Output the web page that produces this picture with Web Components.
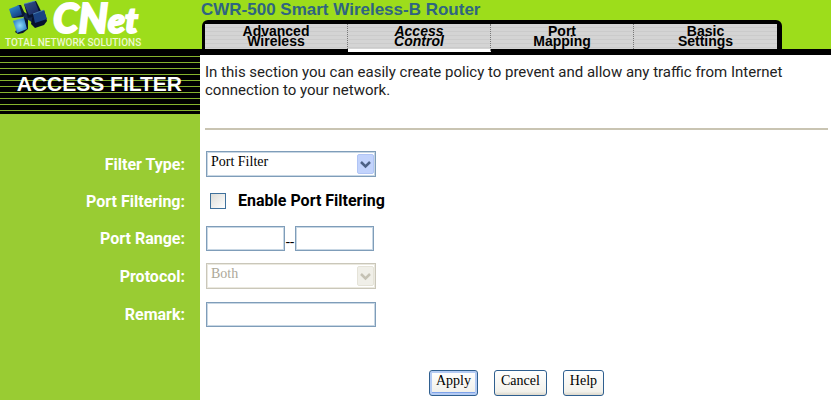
<!DOCTYPE html>
<html lang="en">
<head>
<meta charset="utf-8">
<title>CWR-500 Smart Wireless-B Router</title>
<style>
html,body{height:100%}
body{margin:0;background:#fff;color:#000;font:15px/18px Roboto,"Liberation Sans",sans-serif;
--lime:#9ddd1b;--side:#99cc33;--side-w:200px;--line:#7f9db9;--serif:"Liberation Serif",serif}
</style>
</head>
<body>
<router-page>
  <router-header slot="header" heading="CWR-500 Smart Wireless-B Router">
    <cnet-logo slot="logo"></cnet-logo>
    <nav-tab>Advanced<br>Wireless</nav-tab>
    <nav-tab active>Access<br>Control</nav-tab>
    <nav-tab>Port<br>Mapping</nav-tab>
    <nav-tab>Basic<br>Settings</nav-tab>
  </router-header>
  <section-intro slot="intro" heading="ACCESS FILTER">In this section you can easily create policy to prevent and allow any traffic from Internet connection to your network.</section-intro>
  <select-field label="Filter Type:" value="Port Filter"></select-field>
  <check-field label="Port Filtering:" text="Enable Port Filtering"></check-field>
  <range-field label="Port Range:"></range-field>
  <select-field label="Protocol:" value="Both" disabled></select-field>
  <text-field label="Remark:"></text-field>
  <form-actions slot="actions"><action-button primary>Apply</action-button><action-button>Cancel</action-button><action-button>Help</action-button></form-actions>
</router-page>
<script>
const define=(name,css,html)=>customElements.define(name,class extends HTMLElement{
  constructor(){super();this.attachShadow({mode:'open'});}
  connectedCallback(){
    const t=document.createElement('template');
    t.innerHTML=`<style>*{box-sizing:border-box}${css}</style>${typeof html==='function'?html(this):html}`;
    this.shadowRoot.replaceChildren(t.content.cloneNode(true));
  }
});
const at=(el,n)=>el.getAttribute(n)||'';

define('router-page',`
:host{display:flex;flex-direction:column;min-height:100vh}
main{flex:1;background:linear-gradient(var(--side),var(--side)) left/var(--side-w) 100% no-repeat}
form{display:flex;flex-direction:column;padding-top:15px}
`,`<slot name="header"></slot><main><slot name="intro"></slot><form><slot></slot><slot name="actions"></slot></form></main>`);

define('router-header',`
:host{display:grid;grid-template-columns:var(--side-w) 1fr;background:var(--lime)}
.right{display:flex;flex-direction:column;justify-content:flex-end;background:linear-gradient(#000,#000) bottom/100% 6px no-repeat;margin-bottom:-6px}
h1{margin:0;padding-left:1px;font:bold 17px/20px "Liberation Sans",sans-serif;color:#2f6580;white-space:nowrap}
nav{display:grid;grid-template-columns:repeat(4,1fr);background:#000;border:solid #000;border-width:4px 5px 0 3px;border-radius:6px 6px 0 0;margin:0 49px 0 2px;height:35px}
`,el=>`<slot name="logo"></slot><div class="right"><h1>${at(el,'heading')}</h1><nav><slot></slot></nav></div>`);

define('nav-tab',`
:host{display:block}
a{display:block;height:25px;border-right:1px dotted #777;background:repeating-linear-gradient(#d4d4d4 0 3px,#cbcbcb 3px 4px);color:#000;text-align:center;text-decoration:none;font:bold 14px/10px "Liberation Sans",sans-serif;padding-top:2px}
:host([active]) a{height:28px;font-style:italic;border-bottom:3px solid #fff}
:host(:last-child) a{border-right:0}
`,`<a href="#"><slot></slot></a>`);

define('cnet-logo',`
:host{display:block;height:49px;color:#fff}
.brand{display:flex;height:37px;padding-left:8px;gap:3px}
svg{flex:none}
b{font:italic 900 41px/36px Lato,sans-serif;-webkit-text-stroke:2px #fff}
small{font-size:35px}
p{margin:0;padding-left:5px;font:500 10px/12px Roboto,sans-serif;color:#edf9cf;white-space:nowrap}
`,`<div class="brand"><svg width="42" height="37" viewBox="0 0 42 37" aria-hidden="true">
<defs><linearGradient id="a" x2=".6" y2="1"><stop stop-color="#2f9cdb"/><stop offset="1" stop-color="#153a80"/></linearGradient><radialGradient id="g"><stop stop-color="#8fdcf8"/><stop offset="1" stop-color="#3286c8"/></radialGradient><linearGradient id="n" y2="1"><stop stop-color="#34548c"/><stop offset="1" stop-color="#15245c"/></linearGradient></defs>
<path d="M13 15l3-3 12 7-3 4zM21 10l4 4-7 8-3-3z" fill="#152850"/>
<path d="M10 5l3 0 4 9-2 3-10 1z" fill="#0b1834"/><path d="M1 9l10-4 3 10-10 3z" fill="url(#a)"/>
<path d="M16 17l4 3 0 9-5 4-5 1-3-2z" fill="#0a1530"/><path d="M5 21l11-3 3 11-10 4z" fill="url(#g)"/>
<path d="M16 4l12-3 5 10-3 5-10 2z" fill="#081430"/><path d="M16 4l11-3 4 11-10 3z" fill="url(#n)"/>
<path d="M25 14l11-4 3 11-3 4-9 3-4-4z" fill="#07112e"/><path d="M25 14l11-4 3 9-12 4z" fill="#1a4384"/>
<path d="M16 4l11-3M5 21l11-3M25 14l11-4" stroke="#5d9ccb" stroke-width=".7"/></svg><b>CN<small>et</small></b></div><p>TOTAL NETWORK SOLUTIONS</p>`);

define('section-intro',`
:host{display:grid;grid-template-columns:var(--side-w) 1fr}
h2{margin:0;height:65px;padding:5px 18px 0 0;text-align:right;color:#fff;font:bold 21px/60px "Liberation Sans",sans-serif;white-space:nowrap;
background:repeating-linear-gradient(transparent 0 1px,#86b32d 1px 2px,transparent 2px 6px) 0 6px/100% 58px no-repeat,#000}
div{padding:14px 3px 0 5px}
p{margin:0;padding-right:24px;color:#222}
hr{margin:29px 0 0;border:0;height:2px;background:#c9c4b2}
`,el=>`<h2>${at(el,'heading')}</h2><div><p><slot></slot></p><hr></div>`);

const row=`
:host{display:grid;grid-template-columns:var(--side-w) 1fr;align-items:center;min-height:38px}
.l{justify-self:end;padding:2px 15px 0 0;color:#fff;font-weight:bold;font-size:16px;white-space:nowrap}
.f{display:flex;align-items:center;padding-left:6px}
input[type=text]{width:170px;height:25px;border:1px solid var(--line);outline:1px solid #c8d7e4;outline-offset:-2px;background:#fff;padding:2px 4px;font:14px var(--serif)}
`;
define('text-field',row,el=>`<label class="l" for="i">${at(el,'label')}</label><div class="f"><input type="text" id="i"></div>`);
define('range-field',row+`input[type=text]{width:79px}span{width:10px;text-align:center;padding-top:8px;line-height:16px}`,
el=>`<label class="l" for="i">${at(el,'label')}</label><div class="f"><input type="text" id="i"><span>--</span><input type="text" aria-label="Port range end"></div>`);
define('check-field',row+`:host{min-height:36px}
.f{padding-left:10px;gap:12px;font-weight:bold;font-size:16px}
input{appearance:none;margin:0;width:16px;height:16px;border:1px solid #3f719c;background:linear-gradient(135deg,#dcdcd7,#fff)}
`,el=>`<label class="l" for="i">${at(el,'label')}</label><div class="f"><input type="checkbox" id="i"><label for="i">${at(el,'text')}</label></div>`);
define('select-field',row+`
.box{display:grid;width:170px;height:26px}
select,svg{grid-area:1/1}
select{appearance:none;width:100%;height:100%;margin:0;border:1px solid var(--line);outline:1px solid #c8d7e4;outline-offset:-2px;border-radius:0;background:#fff;color:#000;font:14px/18px var(--serif);padding:0 24px 4px 4px;opacity:1}
select:disabled{border-color:#cac7ba;outline-color:#ebe9df;color:#aca899}
svg{justify-self:end;align-self:center;margin-right:2px;pointer-events:none;z-index:1}
.bg{fill:#c2d3fc;stroke:#b1c5f5}.ar{fill:none;stroke:#4d6185;stroke-width:2.500}
:host([disabled]) .bg{fill:#f0efe8;stroke:#e5e3d8}:host([disabled]) .ar{stroke:#c5c2b4}
`,el=>`<label class="l" for="i">${at(el,'label')}</label><div class="f"><div class="box"><select id="i" ${el.hasAttribute('disabled')?'disabled':''}><option>${at(el,'value')}</option></select><svg width="17" height="20" aria-hidden="true"><rect class="bg" x=".5" y=".5" width="16" height="19" rx="1.5"/><path class="ar" d="M4 8l4.500 4.500L13 8"/></svg></div></div>`);

define('form-actions',`:host{display:flex;justify-content:center;gap:16px;margin:37px 3px 5px calc(var(--side-w) + 5px)}`,`<slot></slot>`);
define('action-button',`
:host{display:block}
button{display:block;height:26px;margin:0;padding:0 6px 4px;border:1px solid #2f5f8f;border-radius:3px;background:linear-gradient(#fff,#f2f1eb 85%,#dcd8cc);color:#000;font:14px/18px var(--serif)}
:host([primary]) button{box-shadow:inset 0 0 0 2px #b4cbf3,inset 0 -3px 0 #7fa3ea}
`,`<button type="button"><slot></slot></button>`);
</script>
</body>
</html>
